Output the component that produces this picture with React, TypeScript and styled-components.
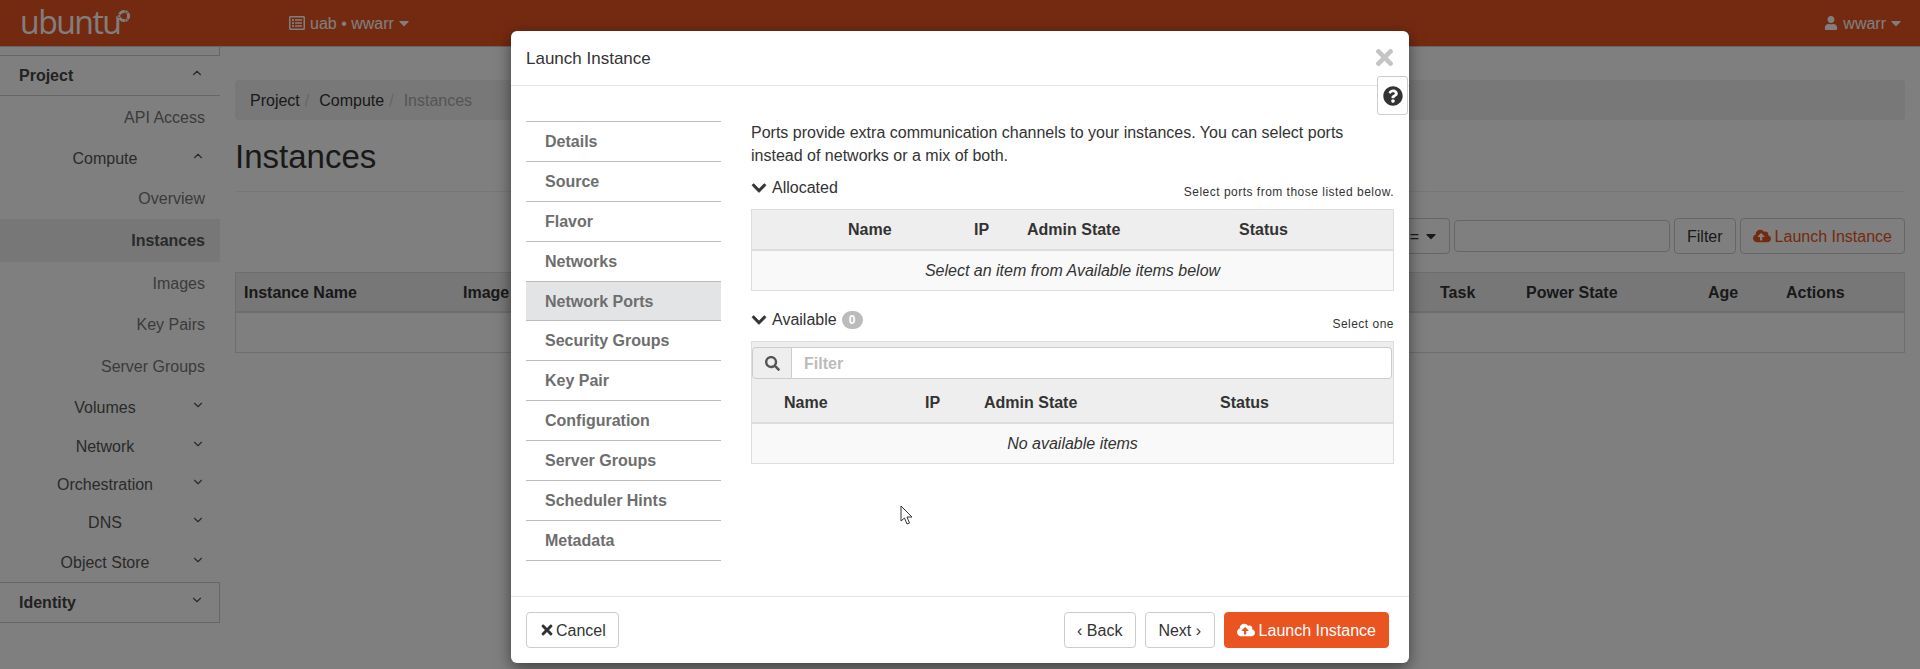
import React from "react";
import styled, { createGlobalStyle } from "styled-components";
import {
  FaCaretDown, FaChevronDown, FaCloudUploadAlt, FaQuestionCircle, FaRegListAlt, FaSearch, FaTimes, FaUser,
} from "react-icons/fa";
import { ChevronDown, ChevronUp } from "lucide-react";

const Global = createGlobalStyle`
  html, body { margin: 0; padding: 0; background: #fff; height: 669px; overflow: hidden; }
  body { font-family: "Liberation Sans", Arial, sans-serif; font-size: 16px; line-height: 23px; color: #333; }
  * { box-sizing: border-box; }
`;

const Page = styled.div`
  position: relative; width: 1920px; height: 669px; overflow: hidden; background: #fff;
`;
const Navbar = styled.header`
  height: 47px; background: #e95420; border-bottom: 1px solid #ccc; color: #fff;
  display: flex; align-items: center; padding-left: 20px; padding-right: 16px;
`;
const LogoText = styled.span`
  font-family: "Open Sans", "Noto Sans", sans-serif; font-weight: 400; font-size: 32px; line-height: 46px;
  letter-spacing: -1.5px; width: 96px; margin-top: -3px; white-space: nowrap;
`;
const LogoMark = styled.svg`
  width: 14px; height: 14px; margin-bottom: 14px; margin-left: 1px;
`;
const Picker = styled.div`
  display: flex; align-items: center; margin-left: 158px; gap: 5px; height: 46px;
`;
const NavSpacer = styled.div`flex: 1;`;
const UserMenu = styled.div`display: flex; align-items: center; gap: 5px; height: 46px;`;
const Caret = styled(FaCaretDown)`margin-left: -3px;`;

const Body = styled.div`display: flex; height: 622px;`;
const Sidebar = styled.nav`width: 220px; flex: none;`;
const SideStub = styled.div`height: 9px; border-right: 1px solid #ccc; border-bottom: 1px solid #ccc;`;
const SideHead = styled.div<{ $boxed?: boolean }>`
  height: ${p => (p.$boxed ? 41 : 40)}px; display: flex; align-items: center; padding-left: 19px; font-weight: 700;
  border-bottom: 1px solid #ccc; border-right: ${p => (p.$boxed ? "1px solid #ccc" : "none")};
  border-top: ${p => (p.$boxed ? "1px solid #ccc" : "none")}; color: #444;
`;
const SideHeadLabel = styled.span`width: 171px;`;
const SideChevron = styled.span`
  width: 14px; height: 14px; display: flex; align-items: center; justify-content: center; margin-top: -5px; margin-left: 0; color: #555;
`;
const SideLeaf = styled.a<{ $h: number; $active?: boolean }>`
  display: flex; align-items: center; justify-content: flex-end; height: ${p => p.$h}px; padding-right: 15px;
  background: ${p => (p.$active ? "#eee" : "transparent")}; font-weight: ${p => (p.$active ? 700 : 400)};
  color: ${p => (p.$active ? "#555" : "#777")};
`;
const SideGroup = styled.a<{ $h: number }>`
  display: flex; align-items: center; height: ${p => p.$h}px; color: #555; padding-left: 18px;
`;
const SideGroupLabel = styled.span`width: 173px; text-align: center; padding-left: 1px;`;

const Main = styled.main`flex: 1; padding: 33px 15px 0;`;
const Breadcrumb = styled.div`
  height: 40px; background: #f1f1f1; border-radius: 4px; padding: 0 15px; display: flex; align-items: center; color: #333;
`;
const CrumbSep = styled.span`color: #ccc; padding: 0 10px 0 5px;`;
const CrumbCurrent = styled.span`color: #aaa;`;
const Title = styled.h1`
  margin: 17px 0 0; font-size: 33px; line-height: 40px; font-weight: 400; color: #333;
  padding-bottom: 14px; border-bottom: 1px solid #eee;
`;
const Toolbar = styled.div`display: flex; justify-content: flex-end; align-items: center; gap: 4px; margin-top: 26px;`;
const Btn = styled.button<{ $primaryText?: boolean }>`
  height: 36px; padding: 0 12px; background: #fff; border: 1px solid #ccc; border-radius: 4px;
  font: inherit; display: inline-flex; align-items: center; gap: 4px; color: ${p => (p.$primaryText ? "#e95420" : "#333")};
`;
const SearchBox = styled.div`width: 216px; height: 32px; border: 1px solid #ccc; border-radius: 4px; background: #fff;`;
const OperatorBtn = styled(Btn)`width: 300px; justify-content: flex-end; padding-right: 10px;`;
const BgTable = styled.div`margin-top: 18px; border: 1px solid #ddd; height: 81px;`;
const BgHead = styled.div`
  height: 40px; background: #eee; border-bottom: 2px solid #ddd; display: grid;
  grid-template-columns: 219px 977px 86px 182px 78px 1fr; padding-left: 8px; align-items: center; font-weight: 700; color: #333;
`;
const BgHeadCell = styled.span``;

const Overlay = styled.div`position: absolute; inset: 0; background: rgba(0, 0, 0, 0.5);`;
const Modal = styled.section`
  position: absolute; left: 511px; top: 31px; width: 898px; height: 632px; background: #fff; border-radius: 6px;
  box-shadow: 0 5px 15px rgba(0, 0, 0, 0.5); display: flex; flex-direction: column;
`;
const ModalHead = styled.div`
  height: 55px; flex: none; border-bottom: 1px solid #e5e5e5; display: flex; align-items: center; padding: 0 15px;
  justify-content: space-between; color: #333;
`;
const ModalTitle = styled.h4`margin: 0; font-size: 17px; font-weight: 400;`;
const CloseX = styled(FaTimes)`color: #c4c4c4; font-size: 25px; margin: 0 -3px 2px 0;`;
const HelpBtn = styled.div`
  position: absolute; right: 1px; top: 45px; width: 31px; height: 39px; background: #fff; border: 1px solid #ccc;
  border-radius: 3px; display: flex; align-items: center; justify-content: center; font-size: 20px; color: #333;
`;
const ModalBody = styled.div`flex: 1; display: flex; padding: 35px 15px 0;`;
const Steps = styled.ul`
  list-style: none; margin: 0; padding: 0; width: 195px; flex: none; border-top: 1px solid #bbb; height: 440px;
`;
const Step = styled.li<{ $active?: boolean }>`
  height: 39.9px; display: flex; align-items: center; padding-left: 19px; font-weight: 700; color: #6e6e6e;
  border-bottom: 1px solid #bbb; background: ${p => (p.$active ? "#e3e4e6" : "transparent")};
`;
const Panel = styled.div`margin-left: 30px; width: 643px; padding-top: 0;`;
const Intro = styled.p`margin: 0; color: #333;`;
const SectionHead = styled.div<{ $top: number }>`
  display: flex; align-items: center; margin-top: ${p => p.$top}px; height: 23px; position: relative; color: #333;
`;
const ChevronIcon = styled(FaChevronDown)`font-size: 16px; margin-right: 5px; color: #333; stroke: #333; stroke-width: 24px;`;
const Badge = styled.span`
  width: 21px; height: 18px; border-radius: 9px; background: #bbb; color: #fff; font-size: 12px; font-weight: 700;
  display: flex; align-items: center; justify-content: center; margin-left: 5px; line-height: 1;
`;
const Hint = styled.span`
  margin-left: auto; font-size: 12px; letter-spacing: 0.49px; color: #333; padding-top: 10px;
`;
const TableBox = styled.div<{ $top: number }>`
  margin-top: ${p => p.$top}px; border: 1px solid #ddd; background: #f9f9f9;
`;
const THead = styled.div<{ $cols: string; $h: number; $pad: number }>`
  display: grid; grid-template-columns: ${p => p.$cols}; height: ${p => p.$h}px; background: #eee; padding-top: ${p => p.$pad}px;
  border-bottom: 2px solid #ddd; align-items: center; font-weight: 700; color: #333;
`;
const THeadCell = styled.span``;
const EmptyRow = styled.div`
  height: 39px; display: flex; align-items: center; justify-content: center; font-style: italic; color: #333;
`;
const FilterBar = styled.div`background: #eee; padding: 5px 1px 0 0; display: flex;`;
const FilterIcon = styled.div`
  width: 40px; height: 32px; flex: none; background: #eee; border: 1px solid #ccc; border-radius: 4px 0 0 4px;
  display: flex; align-items: center; justify-content: center; color: #555; font-size: 15px;
`;
const FilterField = styled.div`
  flex: 1; height: 32px; border: 1px solid #ccc; border-left: 0; border-radius: 0 4px 4px 0; background: #fff;
  color: #bbb; font-weight: 700; padding-left: 12px; display: flex; align-items: center;
`;
const ModalFoot = styled.div`
  height: 67px; flex: none; border-top: 1px solid #e5e5e5; display: flex; align-items: flex-start; padding: 15px 20px 0 15px;
`;
const FootBtn = styled.button`
  height: 36px; background: #fff; border: 1px solid #ccc; border-radius: 4px; font: inherit; color: #333; padding: 0 12px;
  display: inline-flex; align-items: center; gap: 1px;
`;
const StepBtn = styled(FootBtn)`padding: 0 12.5px;`;
const FootSpacer = styled.div`flex: 1;`;
const FootRight = styled.div`display: flex; gap: 9px;`;
const PrimaryBtn = styled(FootBtn)`background: #e95420; border-color: #e95420; color: #fff; gap: 4px;`;
const Pointer = styled.svg`position: absolute; left: 900px; top: 505px; width: 14px; height: 21px;`;

const leaf = (label: string, h: number, active?: boolean) => ({ kind: "leaf" as const, label, h, active });
const group = (label: string, h: number, open?: boolean) => ({ kind: "group" as const, label, h, open });
const sideItems = [
  leaf("API Access", 42), group("Compute", 40, true), leaf("Overview", 41), leaf("Instances", 43, true),
  leaf("Images", 42), leaf("Key Pairs", 41), leaf("Server Groups", 42), group("Volumes", 40),
  group("Network", 38), group("Orchestration", 38), group("DNS", 39), group("Object Store", 40),
];
const steps = ["Details", "Source", "Flavor", "Networks", "Network Ports", "Security Groups", "Key Pair", "Configuration", "Server Groups", "Scheduler Hints", "Metadata"];
const bgCols = ["Instance Name", "Image Name", "Task", "Power State", "Age", "Actions"];
const portCols = ["", "Name", "IP", "Admin State", "Status"];

function Logo() {
  return (
    <LogoMark viewBox="0 0 14 14">
      <circle cx="7" cy="7" r="4.6" fill="none" stroke="#fff" strokeWidth="3" />
      <circle cx="2.2" cy="7" r="1.6" fill="#fff" stroke="#e95420" strokeWidth=".7" />
      <circle cx="9.6" cy="2.8" r="1.6" fill="#fff" stroke="#e95420" strokeWidth=".7" />
      <circle cx="9.6" cy="11.2" r="1.6" fill="#fff" stroke="#e95420" strokeWidth=".7" />
    </LogoMark>
  );
}

function PortTable({ cols, h, top, pad, message, filter }: { cols: string; h: number; top: number; pad: number; message: string; filter?: boolean }) {
  return (
    <TableBox $top={top}>
      {filter && (
        <FilterBar>
          <FilterIcon><FaSearch /></FilterIcon>
          <FilterField>Filter</FilterField>
        </FilterBar>
      )}
      <THead $cols={cols} $h={h} $pad={pad}>
        {portCols.map((c, i) => <THeadCell key={i}>{c}</THeadCell>)}
      </THead>
      <EmptyRow>{message}</EmptyRow>
    </TableBox>
  );
}

export default function App() {
  return (
    <Page>
      <Global />
      <Navbar>
        <LogoText>ubuntu</LogoText>
        <Logo />
        <Picker><FaRegListAlt size={16} /><span>uab • wwarr</span><Caret size={16} /></Picker>
        <NavSpacer />
        <UserMenu><FaUser size={14} /><span>wwarr</span><Caret size={16} /></UserMenu>
      </Navbar>
      <Body>
        <Sidebar>
          <SideStub />
          <SideHead><SideHeadLabel>Project</SideHeadLabel><SideChevron><ChevronUp size={14} /></SideChevron></SideHead>
          {sideItems.map(it => it.kind === "leaf" ? (
            <SideLeaf key={it.label} $h={it.h} $active={it.active}>{it.label}</SideLeaf>
          ) : (
            <SideGroup key={it.label} $h={it.h}>
              <SideGroupLabel>{it.label}</SideGroupLabel>
              <SideChevron>{it.open ? <ChevronUp size={14} /> : <ChevronDown size={14} />}</SideChevron>
            </SideGroup>
          ))}
          <SideHead $boxed><SideHeadLabel>Identity</SideHeadLabel><SideChevron><ChevronDown size={14} /></SideChevron></SideHead>
        </Sidebar>
        <Main>
          <Breadcrumb>
            <span>Project</span><CrumbSep>/</CrumbSep>
            <span>Compute</span><CrumbSep>/</CrumbSep>
            <CrumbCurrent>Instances</CrumbCurrent>
          </Breadcrumb>
          <Title>Instances</Title>
          <Toolbar>
            <OperatorBtn>= <FaCaretDown size={16} /></OperatorBtn>
            <SearchBox />
            <Btn>Filter</Btn>
            <Btn $primaryText><FaCloudUploadAlt size={18} />Launch Instance</Btn>
          </Toolbar>
          <BgTable>
            <BgHead>{bgCols.map(c => <BgHeadCell key={c}>{c}</BgHeadCell>)}</BgHead>
          </BgTable>
        </Main>
      </Body>
      <Overlay />
      <Modal>
        <ModalHead>
          <ModalTitle>Launch Instance</ModalTitle>
          <CloseX />
        </ModalHead>
        <HelpBtn><FaQuestionCircle /></HelpBtn>
        <ModalBody>
          <Steps>
            {steps.map(s => <Step key={s} $active={s === "Network Ports"}>{s}</Step>)}
          </Steps>
          <Panel>
            <Intro>Ports provide extra communication channels to your instances. You can select ports instead of networks or a mix of both.</Intro>
            <SectionHead $top={9}>
              <ChevronIcon />Allocated
              <Hint>Select ports from those listed below.</Hint>
            </SectionHead>
            <PortTable cols="96px 126px 53px 212px 1fr" h={41} top={10} pad={0} message="Select an item from Available items below" />
            <SectionHead $top={17}>
              <ChevronIcon />Available<Badge>0</Badge>
              <Hint>Select one</Hint>
            </SectionHead>
            <PortTable cols="32px 141px 59px 236px 1fr" h={45} top={10} pad={3} message="No available items" filter />
          </Panel>
        </ModalBody>
        <ModalFoot>
          <FootBtn><FaTimes size={16} />Cancel</FootBtn>
          <FootSpacer />
          <FootRight>
            <StepBtn>‹ Back</StepBtn>
            <StepBtn>Next ›</StepBtn>
            <PrimaryBtn><FaCloudUploadAlt size={18} />Launch Instance</PrimaryBtn>
          </FootRight>
        </ModalFoot>
      </Modal>
      <Pointer viewBox="0 0 14 21">
        <path d="M1 1 L1 16 L4.5 13 L7 19 L9.5 18 L7 12 L12 12 Z" fill="#fff" stroke="#333" strokeWidth="1" />
      </Pointer>
    </Page>
  );
}
